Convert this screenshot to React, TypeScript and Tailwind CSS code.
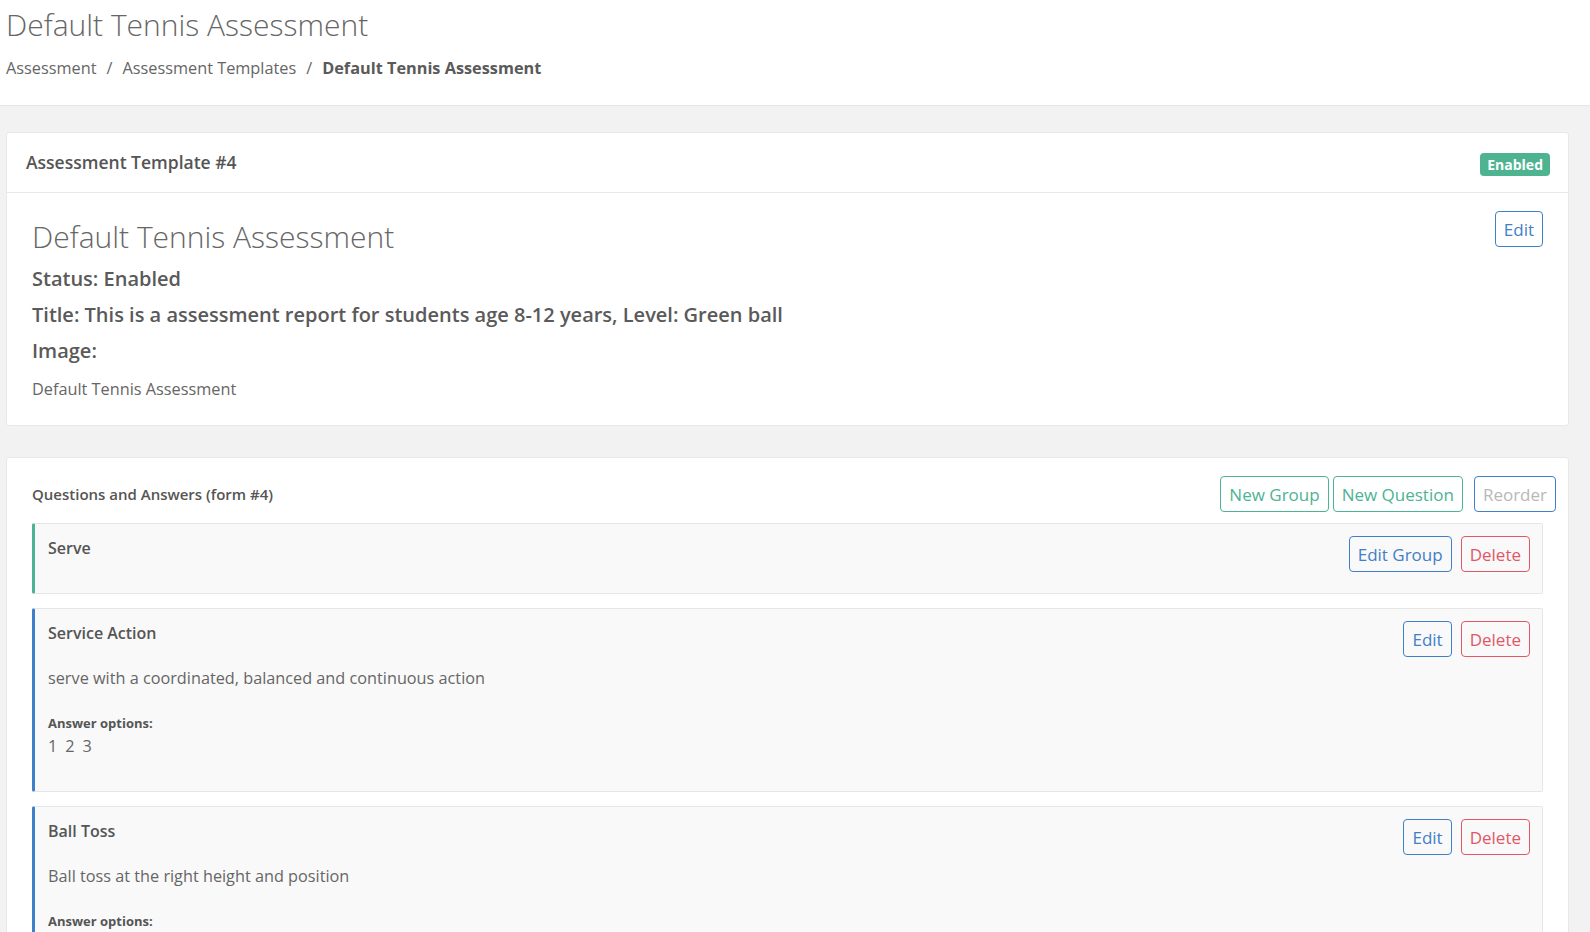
import * as React from "react";

type Question = {
  title: string;
  text: string;
  options: string[];
};

const questions: Question[] = [
  {
    title: "Service Action",
    text: "serve with a coordinated, balanced and continuous action",
    options: ["1", "2", "3"],
  },
  {
    title: "Ball Toss",
    text: "Ball toss at the right height and position",
    options: ["1", "2", "3"],
  },
];

function OutlineButton({
  children,
  tone,
  muted,
}: {
  children: React.ReactNode;
  tone: "blue" | "green" | "red";
  muted?: boolean;
}) {
  const toneClass =
    tone === "blue"
      ? "border-[#3f80c8] text-[#3f80c8]"
      : tone === "green"
        ? "border-[#4cb394] text-[#4cb394]"
        : "border-[#e05866] text-[#e05866]";
  return (
    <button
      className={`h-[36px] shrink-0 rounded-[4px] border bg-transparent px-[8px] text-[17px] leading-none ${toneClass} ${
        muted ? "!text-[#b8b8b8]" : ""
      }`}
    >
      {children}
    </button>
  );
}

export default function App() {
  return (
    <div
      className="min-h-screen bg-[#f2f2f2] text-[#5e5e5e]"
      style={{ fontFamily: '"Open Sans", "Noto Sans", sans-serif' }}
    >
      {/* page header */}
      <header className="h-[106px] border-b border-[#e6e6e6] bg-white px-[6px]">
        <h1 className="pt-[6px] text-[30px] font-light leading-[38px] text-[#666]">
          Default Tennis Assessment
        </h1>
        <nav className="mt-[12px] flex items-center gap-[10px] text-[16.3px] leading-[24px] text-[#666]">
          <span>Assessment</span>
          <span>/</span>
          <span>Assessment Templates</span>
          <span>/</span>
          <span className="font-bold text-[#5a5a5a]">Default Tennis Assessment</span>
        </nav>
      </header>

      <main className="pl-[6px] pr-[21px] pt-[26px]">
        {/* template card */}
        <section className="rounded-[3px] border border-[#e8e8e8] bg-white">
          <div className="flex h-[60px] items-center justify-between border-b border-[#e8e8e8] pl-[19px] pr-[18px]">
            <h2 className="text-[17.5px] font-semibold text-[#555]">Assessment Template #4</h2>
            <span className="mt-[3px] rounded-[4px] bg-[#4db391] px-[7px] py-[1px] text-[14px] font-bold leading-[21px] text-white">
              Enabled
            </span>
          </div>
          <div className="flex items-start justify-between pb-[24px] pl-[25px] pr-[25px] pt-[18px]">
            <div>
              <h3 className="mt-[8px] text-[30px] font-light leading-[36px] text-[#666]">
                Default Tennis Assessment
              </h3>
              <p className="mt-[10px] text-[20px] font-semibold leading-[28px] text-[#5a5a5a]">
                Status: Enabled
              </p>
              <p className="mt-[8px] text-[20px] font-semibold leading-[28px] text-[#5a5a5a]">
                Title: This is a assessment report for students age 8-12 years, Level: Green ball
              </p>
              <p className="mt-[8px] text-[20px] font-semibold leading-[28px] text-[#5a5a5a]">
                Image:
              </p>
              <p className="mt-[12px] text-[16.3px] leading-[24px] text-[#666]">
                Default Tennis Assessment
              </p>
            </div>
            <OutlineButton tone="blue">Edit</OutlineButton>
          </div>
        </section>

        {/* questions card */}
        <section className="mt-[31px] rounded-[3px] border border-[#e8e8e8] bg-white pb-[20px] pl-[25px] pr-[25px] pt-[18px]">
          <div className="-mr-[13px] flex items-center justify-between">
            <h2 className="text-[15px] font-semibold text-[#555]">Questions and Answers (form #4)</h2>
            <div className="flex items-center">
              <OutlineButton tone="green">New Group</OutlineButton>
              <span className="ml-[4px]">
                <OutlineButton tone="green">New Question</OutlineButton>
              </span>
              <span className="ml-[11px]">
                <OutlineButton tone="blue" muted>
                  Reorder
                </OutlineButton>
              </span>
            </div>
          </div>

          <div className="mt-[11px] flex flex-col gap-[14px]">
            <div className="flex items-start justify-between rounded-[2px] border border-l-[3px] border-[#e6e6e6] border-l-[#4cb394] bg-[#f9f9f9] pb-[21px] pl-[13px] pr-[12px] pt-[12px]">
              <h4 className="text-[16px] font-semibold leading-[24px] text-[#555]">Serve</h4>
              <div className="flex gap-[9px]">
                <OutlineButton tone="blue">Edit Group</OutlineButton>
                <OutlineButton tone="red">Delete</OutlineButton>
              </div>
            </div>

            {questions.map((q) => (
              <div
                key={q.title}
                className="flex items-start justify-between rounded-[2px] border border-l-[3px] border-[#e6e6e6] border-l-[#3f80c8] bg-[#f9f9f9] pb-[33px] pl-[13px] pr-[12px] pt-[12px]"
              >
                <div>
                  <h4 className="text-[16px] font-semibold leading-[24px] text-[#555]">{q.title}</h4>
                  <p className="mt-[21px] text-[16.25px] leading-[24px] text-[#666]">{q.text}</p>
                  <p className="mt-[24px] text-[13px] font-bold leading-[18px] text-[#555]">
                    Answer options:
                  </p>
                  <div className="mt-[2px] flex gap-[8px] text-[16.25px] leading-[24px] text-[#666]">
                    {q.options.map((o) => (
                      <span key={o}>{o}</span>
                    ))}
                  </div>
                </div>
                <div className="flex gap-[9px]">
                  <OutlineButton tone="blue">Edit</OutlineButton>
                  <OutlineButton tone="red">Delete</OutlineButton>
                </div>
              </div>
            ))}
          </div>
        </section>
      </main>
    </div>
  );
}
